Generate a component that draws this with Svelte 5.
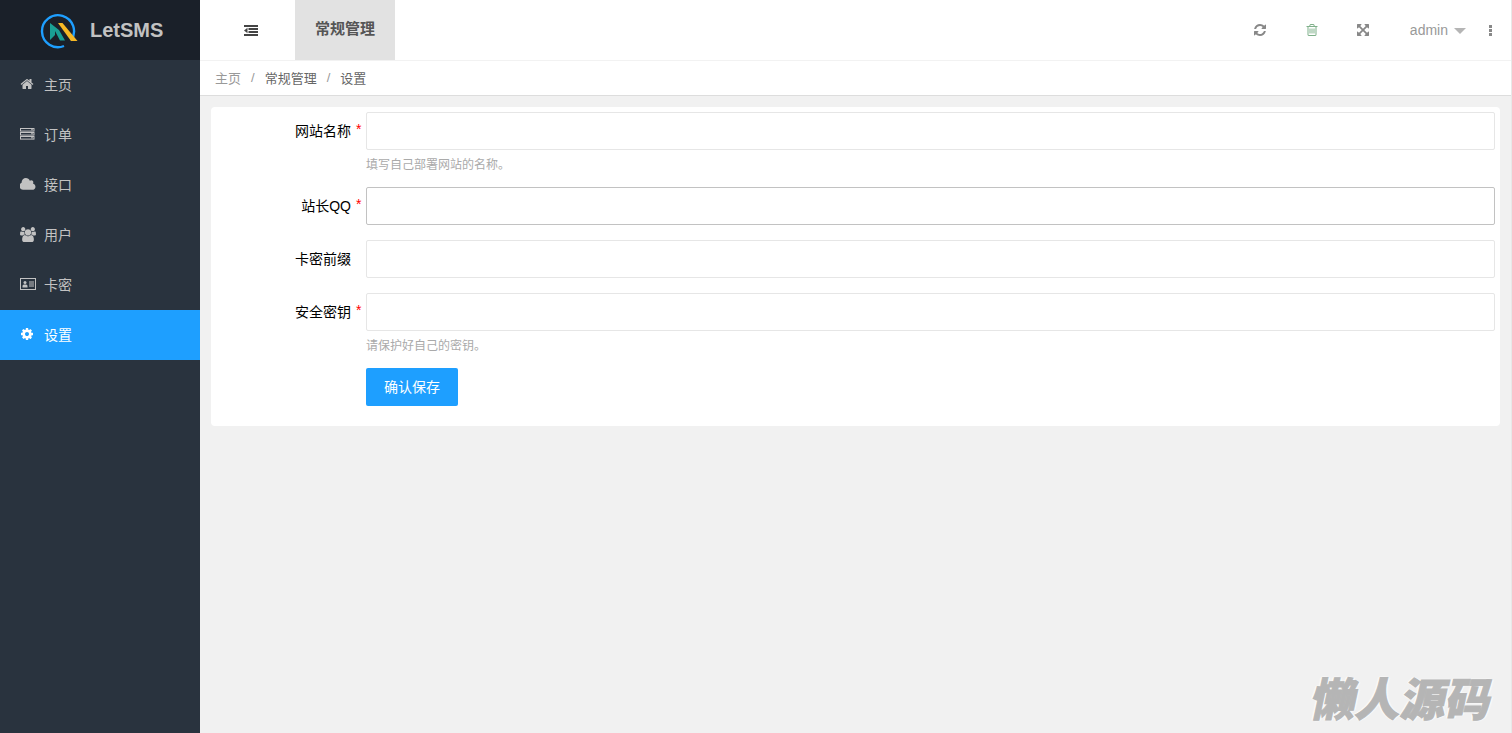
<script>
  const menu = [
    { id: "home", label: "主页" },
    { id: "server", label: "订单" },
    { id: "cloud", label: "接口" },
    { id: "users", label: "用户" },
    { id: "card", label: "卡密" },
    { id: "cog", label: "设置", active: true }
  ];

  const fields = [
    { label: "网站名称", required: true, hint: "填写自己部署网站的名称。" },
    { label: "站长QQ", required: true, hover: true },
    { label: "卡密前缀" },
    { label: "安全密钥", required: true, hint: "请保护好自己的密钥。" }
  ];

  const paths = {
    home: "M1472 992v480q0 26-19 45t-45 19h-384v-384h-256v384h-384q-26 0-45-19t-19-45v-480q0-1 .5-3t.5-3l575-474 575 474q1 2 1 6zm223-69l-62 74q-8 9-21 11h-3q-13 0-21-7l-692-577-692 577q-12 8-24 7-13-2-21-11l-62-74q-8-10-7-23.5t11-21.5l719-599q32-26 76-26t76 26l244 204v-195q0-14 9-23t23-9h192q14 0 23 9t9 23v408l219 182q10 8 11 21.5t-7 23.5z",
    cloud: "M1856 1152q0 159-112.5 271.5t-271.5 112.5h-1088q-185 0-316.5-131.5t-131.5-316.5q0-132 71-241.5t187-163.5q-2-28-2-43 0-212 150-362t362-150q158 0 286.5 88t187.5 230q70-62 166-62 106 0 181 75t75 181q0 75-41 138 129 30 213 134.5t84 239.5z",
    users: "M593 896q-162 5-265 128h-134q-82 0-138-40.5t-56-118.5q0-353 124-353 6 0 43.5 21t97.5 42.5 119 21.5q67 0 133-23-5 37-5 66 0 139 81 256zm1071 637q0 120-73 189.5t-194 69.5h-874q-121 0-194-69.5t-73-189.5q0-53 3.5-103.5t14-109 26.5-108.5 43-97.5 62-81 85.5-53.5 111.5-20q10 0 43 21.5t73 48 107 48 135 21.5 135-21.5 107-48 73-48 43-21.5q61 0 111.5 20t85.5 53.5 62 81 43 97.5 26.5 108.5 14 109 3.5 103.5zm-1024-1277q0 106-75 181t-181 75-181-75-75-181 75-181 181-75 181 75 75 181zm704 384q0 159-112.5 271.5t-271.5 112.5-271.5-112.5-112.5-271.5 112.5-271.5 271.5-112.5 271.5 112.5 112.5 271.5zm576 225q0 78-56 118.5t-138 40.5h-134q-103-123-265-128 81-117 81-256 0-29-5-66 66 23 133 23 59 0 119-21.5t97.5-42.5 43.5-21q124 0 124 353zm-128-609q0 106-75 181t-181 75-181-75-75-181 75-181 181-75 181 75 75 181z",
    cog: "M1152 896q0-106-75-181t-181-75-181 75-75 181 75 181 181 75 181-75 75-181zm512-109v222q0 12-8 23t-20 13l-185 28q-19 54-39 91 35 50 107 138 10 12 10 25t-9 23q-27 37-99 108t-94 71q-12 0-26-9l-138-108q-44 23-91 38-16 136-29 186-7 28-36 28h-222q-14 0-24.5-8.5t-11.5-21.5l-28-184q-49-16-90-37l-141 107q-10 9-25 9-14 0-25-11-126-114-165-168-7-10-7-23 0-12 8-23 15-21 51-66.5t54-70.5q-27-50-41-99l-183-27q-13-2-21-12.5t-8-23.5v-222q0-12 8-23t19-13l186-28q14-46 39-92-40-57-107-138-10-12-10-24 0-10 9-23 26-36 98.5-107.5t94.5-71.5q13 0 26 10l138 107q44-23 91-38 16-136 29-186 7-28 36-28h222q14 0 24.5 8.5t11.5 21.5l28 184q49 16 90 37l142-107q9-9 24-9 13 0 25 10 129 119 165 170 7 8 7 22 0 12-8 23-15 21-51 66.5t-54 70.5q26 50 41 98l183 28q13 2 21 12.5t8 23.5z",
    refresh: "M1639 1056q0 5-1 7-64 268-268 434.5t-478 166.5q-146 0-282.5-55t-243.5-157l-129 129q-19 19-45 19t-45-19-19-45v-448q0-26 19-45t45-19h448q26 0 45 19t19 45-19 45l-137 137q71 66 161 102t187 36q134 0 250-65t186-179q11-17 53-117 8-23 30-23h192q13 0 22.5 9.5t9.5 22.5zm25-800v448q0 26-19 45t-45 19h-448q-26 0-45-19t-19-45 19-45l138-138q-148-137-349-137-134 0-250 65t-186 179q-11 17-53 117-8 23-30 23h-199q-13 0-22.5-9.5t-9.5-22.5v-7q65-268 270-434.5t480-166.5q146 0 284 55.5t245 156.5l130-129q19-19 45-19t45 19 19 45z",
    trash: "M704 736v576q0 14-9 23t-23 9h-64q-14 0-23-9t-9-23v-576q0-14 9-23t23-9h64q14 0 23 9t9 23zm256 0v576q0 14-9 23t-23 9h-64q-14 0-23-9t-9-23v-576q0-14 9-23t23-9h64q14 0 23 9t9 23zm256 0v576q0 14-9 23t-23 9h-64q-14 0-23-9t-9-23v-576q0-14 9-23t23-9h64q14 0 23 9t9 23zm128 724v-948h-896v948q0 22 7 40.5t14.5 27 10.5 8.5h832q3 0 10.5-8.5t14.5-27 7-40.5zm-672-1076h448l-48-117q-7-9-17-11h-317q-10 2-17 11zm928 32v64q0 14-9 23t-23 9h-96v948q0 83-47 143.5t-113 60.5h-832q-66 0-113-58.5t-47-141.5v-952h-96q-14 0-23-9t-9-23v-64q0-14 9-23t23-9h309l70-167q15-37 54-63t79-26h320q40 0 79 26t54 63l70 167h309q14 0 23 9t9 23z",
    expand: "M1411 541l-355 355 355 355 144-144q29-31 70-14 39 17 39 59v448q0 26-19 45t-45 19h-448q-42 0-59-40-17-39 14-69l144-144-355-355-355 355 144 144q31 30 14 69-17 40-59 40h-448q-26 0-45-19t-19-45v-448q0-42 40-59 39-17 69 14l144 144 355-355-355-355-144 144q-19 19-45 19-12 0-24-5-40-17-40-59v-448q0-26 19-45t45-19h448q42 0 59 40 17 39-14 69l-144 144 355 355 355-355-144-144q-31-30-14-69 17-40 59-40h448q26 0 45 19t19 45v448q0 42-39 59-13 5-25 5-26 0-45-19z"
  };
</script>

<div class="layout">
  <aside class="side">
    <div class="brand">
      <svg class="logo" viewBox="0 0 38 36" width="38" height="36">
        <path d="M31 27.500A16 16 0 1 0 24 33" fill="none" stroke="#1e9fff" stroke-width="2.400" />
        <path d="M10 10V27L15 22V18L20 27.500H25L19 17z" fill="#1aa094" />
        <path d="M18 10h4.500L37.500 28h-6.500z" fill="#f7b824" />
      </svg>
      <span class="brand-name">LetSMS</span>
    </div>
    <nav>
      {#each menu as item}
        <a class="menu-item" class:active={item.active} href="#top">
          <span class="menu-icon">
            {#if item.id === "server"}
              <svg viewBox="0 0 14.500 12" width="14.500" height="12">
                <g fill="none" stroke="currentColor">
                  <rect x=".5" y=".5" width="13.500" height="2.600" />
                  <rect x=".5" y="4.500" width="13.500" height="2.600" />
                  <rect x=".5" y="8.500" width="13.500" height="2.600" />
                </g>
                <path d="M11 1.800h2M11 5.800h2M11 9.800h2" stroke="currentColor" />
              </svg>
            {:else if item.id === "card"}
              <svg viewBox="0 0 16 12" width="16" height="12">
                <rect x=".5" y=".5" width="15" height="11" fill="none" stroke="currentColor" />
                <circle cx="5" cy="4.600" r="1.500" fill="currentColor" />
                <path d="M2.500 9.500V8q0-1.500 1.500-1.500h2Q7.500 6.500 7.500 8v1.500z" fill="currentColor" />
                <path d="M9 4h5M9 6h5M9 8h5" stroke="currentColor" fill="none" />
              </svg>
            {:else if item.id === "home"}
              <svg viewBox="0 0 1792 1792" width="14" height="14"><path d={paths.home} fill="currentColor" /></svg>
            {:else if item.id === "cloud"}
              <svg viewBox="0 0 1920 1792" width="16" height="15"><path d={paths.cloud} fill="currentColor" /></svg>
            {:else if item.id === "users"}
              <svg viewBox="0 0 1920 1792" width="16" height="15"><path d={paths.users} fill="currentColor" /></svg>
            {:else}
              <svg viewBox="0 0 1792 1792" width="14" height="14"><path d={paths.cog} fill="currentColor" /></svg>
            {/if}
          </span>
          <span>{item.label}</span>
        </a>
      {/each}
    </nav>
  </aside>

  <main class="main">
    <header class="top">
      <button class="toggle" aria-label="收起菜单">
        <svg viewBox="0 0 14 11" width="14" height="11">
          <path d="M0 5.500L3.500 2.800v5.400z" fill="#444" />
          <path d="M0 1h14M4.500 4h9.500M4.500 7h9.500M0 10h14" stroke="#444" stroke-width="2" fill="none" />
        </svg>
      </button>
      <div class="tab">常规管理</div>
      <div class="tools">
        <span class="tool"><svg viewBox="0 0 1792 1792" width="14" height="14"><path d={paths.refresh} fill="#888" /></svg></span>
        <span class="tool"><svg viewBox="0 0 1792 1792" width="14" height="14"><path d={paths.trash} fill="#7fb08a" /></svg></span>
        <span class="tool"><svg viewBox="0 0 1792 1792" width="14" height="14"><path d={paths.expand} fill="#888" /></svg></span>
        <span class="user">admin<i class="caret"></i></span>
        <span class="more"><i></i><i></i><i></i></span>
      </div>
    </header>

    <div class="crumbs">
      <span class="first">主页</span><span class="sep">/</span><span>常规管理</span><span class="sep">/</span><span>设置</span>
    </div>

    <div class="content">
      <form class="card">
        {#each fields as f}
          <div class="row">
            <label class="label">
              <span>{f.label}</span>
              <span class="star">{f.required ? "*" : ""}</span>
            </label>
            <div class="field">
              <input class:hover={f.hover} type="text" />
              {#if f.hint}<div class="hint">{f.hint}</div>{/if}
            </div>
          </div>
        {/each}
        <div class="row last">
          <span class="label"></span>
          <button class="save" type="button">确认保存</button>
        </div>
      </form>
    </div>
  </main>

  <div class="watermark">懒人源码</div>
</div>

<style>
  :global(body) {
    margin: 0;
    background: #f1f1f1;
  }

  .layout {
    display: flex;
    height: 733px;
    overflow: hidden;
    position: relative;
    font-family: "Liberation Sans", "Noto Sans CJK SC", sans-serif;
    font-size: 14px;
    color: #333;
  }

  .side {
    width: 200px;
    flex: none;
    background: #29333e;
  }

  .brand {
    height: 60px;
    background: #1a2029;
    display: flex;
    align-items: center;
    padding-left: 40px;
    box-sizing: border-box;
  }

  .logo {
    flex: none;
    margin-top: 2px;
  }

  .brand-name {
    margin-left: 12px;
    font-size: 20px;
    font-weight: bold;
    color: #c2c2c2;
  }

  .menu-item {
    display: flex;
    align-items: center;
    height: 50px;
    box-sizing: border-box;
    padding: 0 0 2px 20px;
    color: #c2c2c2;
    text-decoration: none;
  }

  .menu-item.active {
    background: #1e9fff;
    color: #fff;
  }

  .menu-icon {
    width: 24px;
    display: flex;
    align-items: center;
  }

  .main {
    flex: 1;
    min-width: 0;
    display: flex;
    flex-direction: column;
    border-right: 1px solid #e8e8e8;
  }

  .top {
    height: 61px;
    box-sizing: border-box;
    background: #fff;
    border-bottom: 1px solid #f2f2f2;
    display: flex;
    flex: none;
  }

  .toggle {
    width: 95px;
    border: none;
    background: none;
    padding: 0 0 0 7px;
    display: flex;
    align-items: center;
    justify-content: center;
  }

  .tab {
    width: 100px;
    background: #e2e2e2;
    text-align: center;
    line-height: 58px;
    font-size: 15px;
    font-weight: bold;
    color: #555;
  }

  .tools {
    margin-left: auto;
    display: flex;
    align-items: center;
    padding-right: 19px;
    color: #999;
  }

  .tool {
    width: 51.500px;
    display: flex;
    justify-content: center;
  }

  .user {
    margin-left: 21px;
    display: flex;
    align-items: center;
  }

  .caret {
    margin: 2px 0 0 6px;
    width: 0;
    height: 0;
    border: 6px solid transparent;
    border-top: 6px solid #b5b5b5;
    border-bottom: 0;
  }

  .more {
    margin-left: 23px;
    display: flex;
    flex-direction: column;
    gap: 1px;
  }

  .more i {
    width: 3px;
    height: 3px;
    background: #888;
  }

  .crumbs {
    height: 35px;
    box-sizing: border-box;
    background: #fff;
    border-bottom: 1px solid #ddd;
    padding: 0 0 2px 15px;
    display: flex;
    align-items: center;
    font-size: 13px;
    color: #666;
    flex: none;
  }

  .first {
    color: #999;
  }

  .sep {
    margin: 0 10px;
    color: #999;
  }

  .content {
    flex: 1;
    padding: 11px 11px 0 11px;
  }

  .card {
    background: #fff;
    border-radius: 4px;
    padding: 5px 5px 20px 0;
  }

  .row {
    display: flex;
    margin-bottom: 15px;
  }

  .row.last {
    margin-bottom: 0;
  }

  .label {
    width: 155px;
    flex: none;
    display: flex;
    justify-content: flex-end;
    line-height: 38px;
    color: #000;
    font-size: 14px;
  }

  .star {
    width: 5px;
    margin: 0 5px;
    line-height: 35px;
    color: #f00;
  }

  .field {
    flex: 1;
    min-width: 0;
  }

  input {
    display: block;
    width: 100%;
    height: 38px;
    box-sizing: border-box;
    border: 1px solid #e6e6e6;
    border-radius: 2px;
    background: #fff;
    outline: none;
    padding: 0 10px;
  }

  input.hover {
    border-color: #c2c2c2;
  }

  .hint {
    padding-top: 9px;
    line-height: 13px;
    font-size: 12px;
    color: #aaa;
  }

  .save {
    width: 92px;
    height: 38px;
    border: none;
    border-radius: 2px;
    background: #1e9fff;
    color: #fff;
    font: inherit;
    padding: 0 0 2px;
  }

  .watermark {
    position: absolute;
    right: 19px;
    bottom: 8px;
    font-family: "Noto Sans CJK SC", sans-serif;
    font-size: 45px;
    line-height: 56px;
    font-weight: 900;
    color: #b5b5b5;
    -webkit-text-stroke: 1px #b5b5b5;
    text-shadow: 1px 1px 1px #fafafa, -1px -1px 1px #fafafa, 2px 0 1px #fafafa, -2px 0 1px #fafafa;
    transform: skewX(-12deg);
  }
</style>
